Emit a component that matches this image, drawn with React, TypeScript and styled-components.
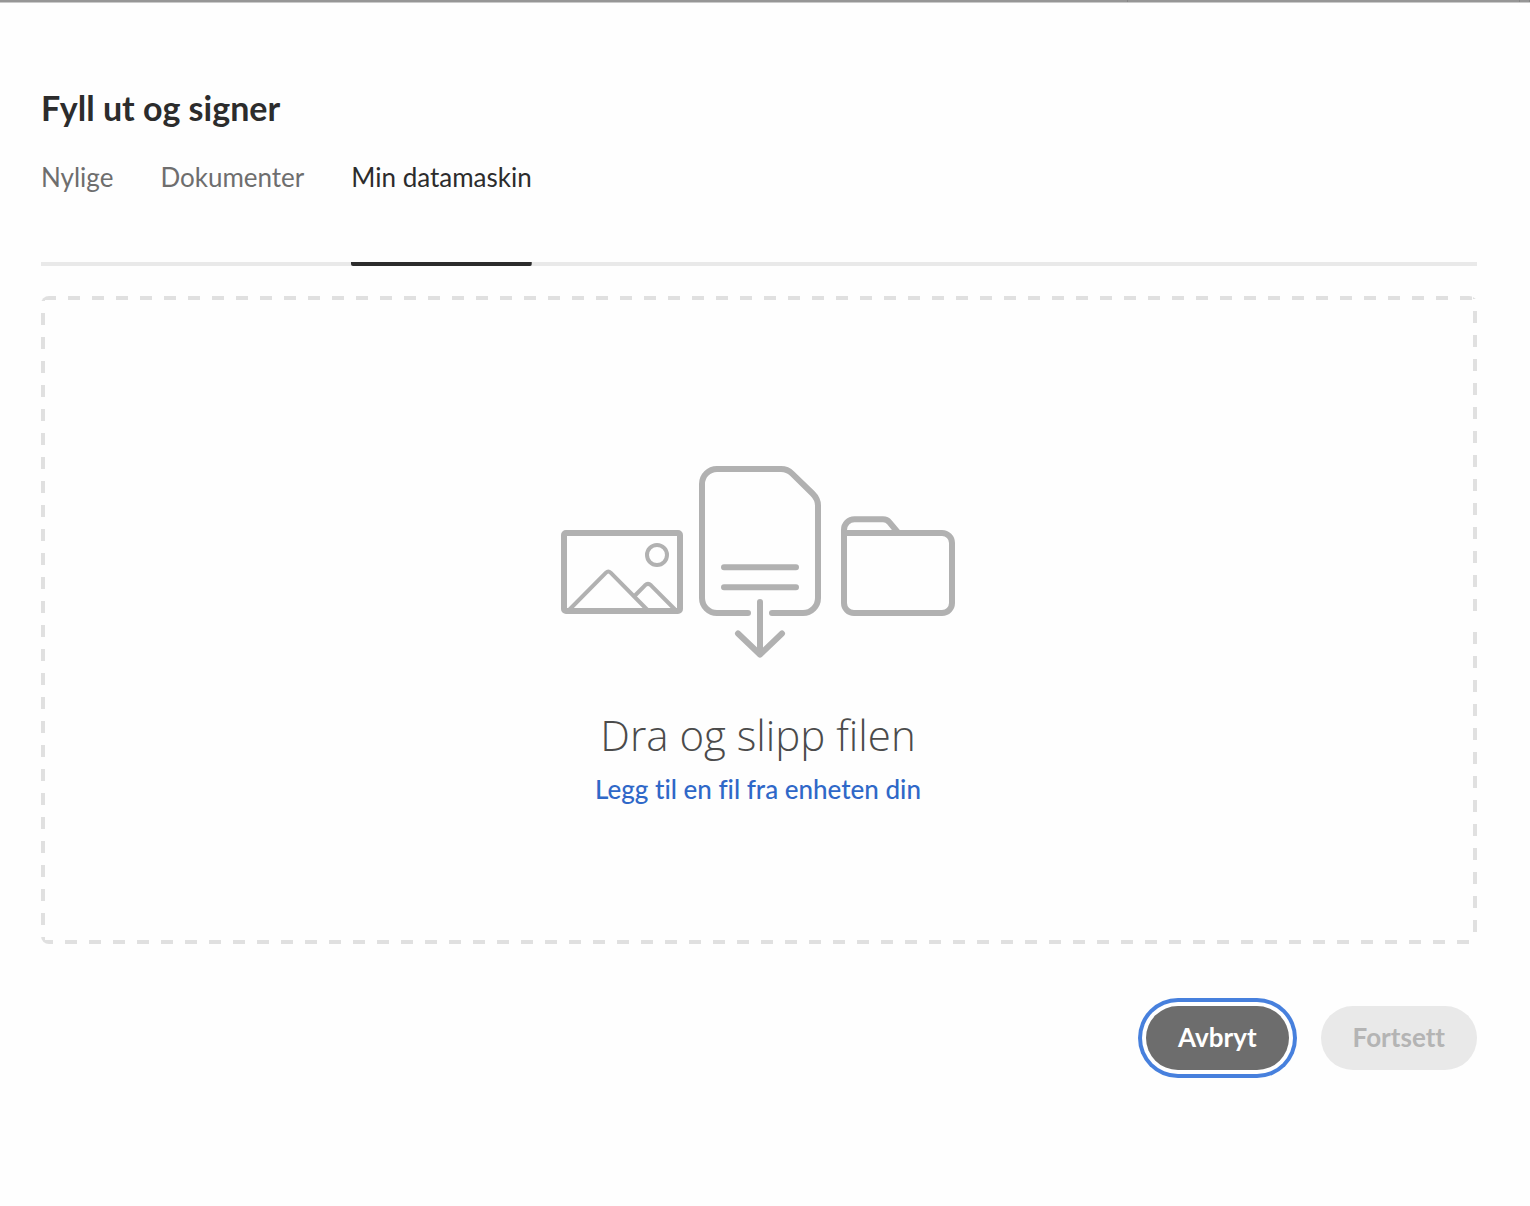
import React, { useState } from 'react';
import styled, { createGlobalStyle } from 'styled-components';

const GlobalStyle = createGlobalStyle`
  *, *::before, *::after { box-sizing: border-box; }
  body {
    margin: 0;
    background: #fefefe;
    color: #2c2c2c;
    font-family: Lato, "Open Sans", sans-serif;
    font-variant-ligatures: none;
  }
`;

const WindowEdge = styled.div`
  display: flex;
  height: 3px;
  background: #969696;
  border-bottom: 1px solid #cacaca;
`;

const EdgeSegment = styled.div<{ $width?: number }>`
  flex: ${p => (p.$width ? `0 0 ${p.$width}px` : '1')};
  border-right: 1px solid #858585;
`;

const Dialog = styled.main`
  padding: 85px 53px 128px 41px;
`;

const Title = styled.h1`
  margin: 0;
  font-size: 34px;
  line-height: 40px;
  font-weight: 700;
`;

const TabList = styled.div`
  display: flex;
  gap: 47px;
  margin-top: 33px;
  background: linear-gradient(#e9e9e9, #e9e9e9) bottom / 100% 4px no-repeat;
`;

const Tab = styled.button<{ $active: boolean }>`
  padding: 0 0 73px;
  border: 0;
  border-radius: 2px;
  background: ${p => (p.$active ? 'linear-gradient(#2c2c2c, #2c2c2c) bottom / 100% 4px no-repeat' : 'none')};
  color: ${p => (p.$active ? '#2c2c2c' : '#6e6e6e')};
  font: inherit;
  font-size: 26px;
  line-height: 32px;
  cursor: pointer;
`;

const dash = '#e0e0e0';

const DropZone = styled.section`
  display: flex;
  flex-direction: column;
  align-items: center;
  margin-top: 30px;
  padding: 170px 26px 139px 24px;
  border-radius: 8px;
  background:
    linear-gradient(to right, ${dash} 12px, transparent 12px) calc(50% - 7px) top / 24px 4px repeat-x,
    linear-gradient(to right, ${dash} 12px, transparent 12px) calc(50% - 10px) bottom / 24px 4px repeat-x,
    linear-gradient(to bottom, ${dash} 12px, transparent 12px) left calc(50% - 7px) / 4px 24px repeat-y,
    repeating-linear-gradient(to top, transparent 0 9px, ${dash} 9px 21px, transparent 21px 24px) right top / 4px 50% no-repeat,
    repeating-linear-gradient(to bottom, transparent 0 12px, ${dash} 12px 24px) right bottom / 4px 50% no-repeat;
`;

const Illustration = styled.svg`
  display: block;
  fill: none;
  stroke: #b1b1b1;
  stroke-width: 6px;
  stroke-linecap: round;
  stroke-linejoin: round;
`;

const FineDetail = styled.g`
  stroke-width: 4px;
`;

const DropHeading = styled.h2`
  margin: 51px 0 0;
  color: #4b4b4b;
  font-family: "Open Sans", Lato, sans-serif;
  font-size: 42px;
  line-height: 52px;
  font-weight: 300;
`;

const FileLink = styled.a`
  margin-top: 12px;
  color: #2f68c8;
  font-size: 26px;
  line-height: 32px;
  font-weight: 500;
  text-decoration: none;
`;

const Actions = styled.footer`
  display: flex;
  justify-content: flex-end;
  gap: 32px;
  margin-top: 62px;
`;

const PillButton = styled.button<{ $focused?: boolean }>`
  padding: 15px 32px 17px;
  border: 0;
  border-radius: 32px;
  background: #6d6d6d;
  color: #ffffff;
  font: inherit;
  font-size: 26px;
  line-height: 32px;
  font-weight: 700;
  box-shadow: ${p => (p.$focused ? '0 0 0 4px #ffffff, 0 0 0 8px #4780dd' : 'none')};
  outline: none;

  &:disabled {
    background: #e9e9e9;
    color: #b4b4b4;
  }
`;

function DropIllustration() {
  return (
    <Illustration width="394" height="192" viewBox="561 466 394 192" aria-hidden="true">
      <rect x="564" y="533" width="116" height="78" rx="2" />
      <FineDetail>
        <circle cx="657" cy="555" r="10" />
        <path d="M569 610 L606 572.6 Q608.3 570.4 610.6 572.6 L647 609.5" />
        <path d="M634.5 596 L645 585.3 Q648 582.6 651 585.3 L675 609.5" />
      </FineDetail>
      <path d="M748 613 H717 A15 15 0 0 1 702 598 V484 A15 15 0 0 1 717 469 H781 Q787.5 469 792 473.5 L812.5 493.5 Q818 499 818 505.5 V598 A15 15 0 0 1 803 613 H772" />
      <path d="M724 567.3 H796 M724 587.3 H796" />
      <path d="M760 602 V654.5 M738 633.5 L760 654.5 L782 633.5" />
      <path d="M844 533 H942 A10 10 0 0 1 952 543 V603 A10 10 0 0 1 942 613 H854 A10 10 0 0 1 844 603 V530 A10.5 10.5 0 0 1 854.5 519.3 H883 Q887 519.3 889.5 522.3 L897.5 532" />
    </Illustration>
  );
}

const tabs = ['Nylige', 'Dokumenter', 'Min datamaskin'];

export default function App() {
  const [active, setActive] = useState('Min datamaskin');
  return (
    <>
      <GlobalStyle />
      <WindowEdge>
        <EdgeSegment />
        <EdgeSegment $width={392} />
        <EdgeSegment $width={10} />
      </WindowEdge>
      <Dialog>
        <Title>Fyll ut og signer</Title>
        <TabList role="tablist">
          {tabs.map(name => (
            <Tab
              key={name}
              type="button"
              role="tab"
              aria-selected={name === active}
              $active={name === active}
              onClick={() => setActive(name)}
            >
              {name}
            </Tab>
          ))}
        </TabList>
        <DropZone>
          <DropIllustration />
          <DropHeading>Dra og slipp filen</DropHeading>
          <FileLink href="#">Legg til en fil fra enheten din</FileLink>
        </DropZone>
        <Actions>
          <PillButton type="button" $focused>Avbryt</PillButton>
          <PillButton type="button" disabled>Fortsett</PillButton>
        </Actions>
      </Dialog>
    </>
  );
}
